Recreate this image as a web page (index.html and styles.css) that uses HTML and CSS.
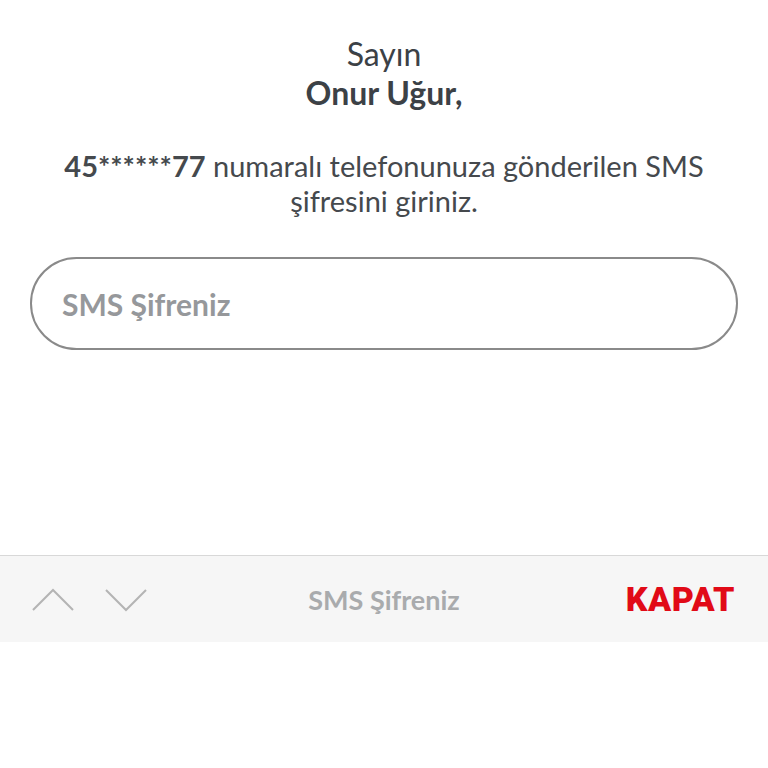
FILE: index.html
```html
<!DOCTYPE html>
<html lang="tr">
<head>
    <meta charset="UTF-8">
    <meta name="viewport" content="width=device-width, initial-scale=1.0">
    <title>SMS Şifresi</title>
    <link rel="stylesheet" href="styles.css">
</head>
<body>
    <div class="content">
        <div class="greeting">
            <div class="greeting-hello">Sayın</div>
            <div class="greeting-name">Onur Uğur,</div>
        </div>
        <p class="message">
            <b>45******77</b> numaralı telefonunuza gönderilen SMS<br>şifresini giriniz.
        </p>
        <div class="form-element">
            <input type="text" id="smsCode" placeholder="SMS Şifreniz">
        </div>
    </div>

    <div class="toolbar">
        <div class="arrows">
            <svg width="42" height="24" viewBox="0 0 42 24"><path d="M1 22 L21 2 L41 22" fill="none" stroke="#b4b4b4" stroke-width="2"/></svg>
            <svg width="42" height="24" viewBox="0 0 42 24"><path d="M1 2 L21 22 L41 2" fill="none" stroke="#b4b4b4" stroke-width="2"/></svg>
        </div>
        <div class="toolbar-title">SMS Şifreniz</div>
        <button class="close-btn">KAPAT</button>
    </div>
</body>
</html>
```

FILE: styles.css
```css
*{
    margin: 0px;
    padding: 0px;
    box-sizing: border-box;
}

body{
    font-family: "Lato", "Open Sans", sans-serif;
    color: #3c4146;
    background: #fff;
}

.content{
    height: 555px;
    padding: 34px 30px 0 30px;
    text-align: center;
}

.greeting{
    font-size: 32px;
    line-height: 39px;
}

.greeting-name{
    font-weight: 700;
}

.message{
    margin-top: 36px;
    font-size: 29px;
    line-height: 35px;
    color: #45494d;
}

.message b{
    font-weight: 700;
}

.form-element{
    margin-top: 39px;
}

.form-element input{
    width: 100%;
    height: 93px;
    border: 2px solid #8a8a8a;
    border-radius: 47px;
    padding: 0 30px;
    font-family: inherit;
    font-size: 30px;
    outline: none;
}

.form-element input::placeholder{
    color: #96989b;
    font-weight: 700;
}

.toolbar{
    height: 87px;
    background: #f6f6f6;
    border-top: 1px solid #d8d8d8;
    display: flex;
    align-items: center;
    justify-content: space-between;
    padding: 0 33px 0 32px;
    position: relative;
}

.arrows{
    display: flex;
    gap: 31px;
    padding-top: 2px;
}

.toolbar-title{
    position: absolute;
    left: 0;
    right: 0;
    text-align: center;
    font-size: 27px;
    color: #a9abad;
    font-weight: 700;
    pointer-events: none;
}

.close-btn{
    background: transparent;
    border: none;
    font-family: "Roboto", sans-serif;
    font-weight: 900;
    font-size: 34px;
    color: #e10a17;
    letter-spacing: 0.5px;
}
```
